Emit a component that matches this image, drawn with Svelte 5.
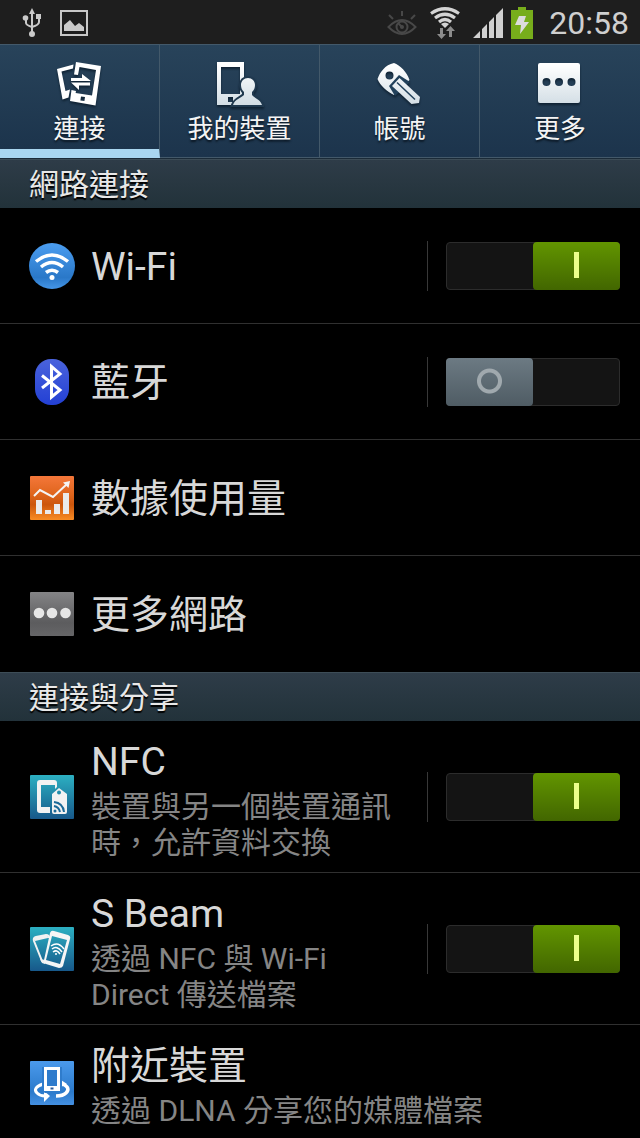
<script>
  /**
   * Settings — the "Connections" tab of the phone settings screen.
   */

  const tabs = [
    { id: 'connections', label: '連接' },
    { id: 'device', label: '我的裝置' },
    { id: 'accounts', label: '帳號' },
    { id: 'more', label: '更多' },
  ];

  let activeTab = $state('connections');

  let sections = $state([
    {
      title: '網路連接',
      rows: [
        { id: 'wifi', title: 'Wi-Fi', toggle: true, on: true },
        { id: 'bluetooth', title: '藍牙', toggle: true, on: false },
        { id: 'data', title: '數據使用量' },
        { id: 'networks', title: '更多網路' },
      ],
    },
    {
      title: '連接與分享',
      rows: [
        { id: 'nfc', title: 'NFC', note: '裝置與另一個裝置通訊時，允許資料交換', toggle: true, on: true },
        { id: 'sbeam', title: 'S Beam', note: '透過 NFC 與 Wi-Fi Direct 傳送檔案', toggle: true, on: true },
        { id: 'nearby', title: '附近裝置', note: '透過 DLNA 分享您的媒體檔案' },
      ],
    },
  ]);
</script>

{#snippet tabIcon(id)}
  <svg class="tab-icon" viewBox="0 0 48 48" aria-hidden="true">
    <defs>
      <linearGradient id="silver" x1="0" y1="0" x2="0" y2="48" gradientUnits="userSpaceOnUse">
        <stop offset="0.1" stop-color="#fff" />
        <stop offset="1" stop-color="#cfdbe3" />
      </linearGradient>
    </defs>
    {#if id === 'connections'}
      <g fill="#fff">
        <path d="M1 9 17.5 4.5 17 8.5 5.5 11.5 9.5 31 14 29.5 12.5 37.5 6.5 39.5Z" />
        <path fill-rule="evenodd" d="M20 2 45 6 39.5 45.5 14 41 15.5 30 20 31 19.6 33 36 35.5 40 10 23.5 7 22 15 18 14.5ZM25 36.5l-.6 4 4 .6.6-4Z" />
        <path d="M15 18h11v-4l9 7H15Z" />
        <path d="M15 22.5h19v3H23v4.5Z" />
      </g>
    {:else if id === 'device'}
      <path fill="url(#silver)" fill-rule="evenodd" d="M1 2h27v43H1ZM5 7v27h19V7ZM12 37v5h5v-5Z" />
      <path class="person" d="M32 18c-4 0-7 3-7 7 0 3 1 5 3 7v3c-3 3-9 4-11 10h29c-2-6-8-7-10-10v-3c2-2 3-4 3-7 0-4-3-7-7-7Z" />
      <path fill="url(#silver)" d="M32 18c-4 0-7 3-7 7 0 3 1 5 3 7v3c-3 3-9 4-11 10h29c-2-6-8-7-10-10v-3c2-2 3-4 3-7 0-4-3-7-7-7Z" />
    {:else if id === 'accounts'}
      <path fill="url(#silver)" fill-rule="evenodd" d="M18 3c6 2 13 9 15.5 17L18 35C12 32 4 26 1.5 19 4 12 9 5 18 3ZM13.5 11.5a4 4 0 1 0 0 8 4 4 0 0 0 0-8Z" />
      <path fill="#21405a" d="M23 15 34 22 19 36 13 26Z" />
      <path fill="url(#silver)" d="M23.5 18 44 37 43 43 35.5 44 16 26Z" />
      <path fill="none" stroke="#21405a" stroke-width="1.5" d="M21 22.5 39 39.5" />
    {:else}
      <path fill="url(#silver)" fill-rule="evenodd" d="M4 3h38a2 2 0 0 1 2 2v36a2 2 0 0 1-2 2H4a2 2 0 0 1-2-2V5a2 2 0 0 1 2-2ZM10.5 18a4 4 0 1 0 0 8 4 4 0 0 0 0-8ZM23 18a4 4 0 1 0 0 8 4 4 0 0 0 0-8ZM35.5 18a4 4 0 1 0 0 8 4 4 0 0 0 0-8Z" />
    {/if}
  </svg>
{/snippet}

{#snippet rowIcon(id)}
  <svg class="row-icon" viewBox="0 0 46 46" aria-hidden="true">
    {#if id === 'wifi'}
      <defs>
        <linearGradient id="wifi-bg" x2="0" y2="1">
          <stop offset="0" stop-color="#4b9df0" />
          <stop offset="0.75" stop-color="#2a78c8" />
          <stop offset="1" stop-color="#4596e8" />
        </linearGradient>
      </defs>
      <circle cx="23" cy="23" r="23" fill="url(#wifi-bg)" />
      <g fill="none" stroke="#fff" stroke-width="3.5">
        <path d="M7 18.5Q23 5.5 39 18.5" />
        <path d="M12 24Q23 15 34 24" />
        <path d="M17 29.5Q23 25 29 29.5" />
      </g>
      <circle cx="23" cy="34.5" r="2.5" fill="#fff" />
    {:else if id === 'bluetooth'}
      <defs>
        <linearGradient id="bt-bg" x2="0" y2="1">
          <stop offset="0" stop-color="#4a63dc" />
          <stop offset="1" stop-color="#2340d4" />
        </linearGradient>
      </defs>
      <rect x="6" width="34" height="46" rx="16" fill="url(#bt-bg)" />
      <path d="M13 16.5 31 31 22.5 38V7.5L31 15 13 29" fill="none" stroke="#fff" stroke-width="3" />
    {:else if id === 'data'}
      <defs>
        <linearGradient id="data-bg" x2="0" y2="1">
          <stop offset="0" stop-color="#f4773a" />
          <stop offset="0.4" stop-color="#e0661e" />
          <stop offset="0.65" stop-color="#cc560c" />
          <stop offset="1" stop-color="#f88c24" />
        </linearGradient>
      </defs>
      <rect x="1" y="1" width="44" height="44" rx="1" fill="url(#data-bg)" />
      <path d="M7 25h6v14H7ZM16 35h6v4h-6ZM25 29h6v10h-6ZM34 18h6v21h-6Z" fill="#eaeaea" />
      <path d="M5 21 11 15 24 22 38 9" fill="none" stroke="#f4f4f4" stroke-width="2" />
      <path d="M34 7.5 41 6 39.5 13Z" fill="#f4f4f4" />
    {:else if id === 'networks'}
      <defs>
        <linearGradient id="net-bg" x2="0" y2="1">
          <stop offset="0" stop-color="#848486" />
          <stop offset="0.7" stop-color="#5c5c5e" />
          <stop offset="1" stop-color="#666668" />
        </linearGradient>
      </defs>
      <rect x="1" y="1" width="44" height="44" rx="1" fill="url(#net-bg)" />
      <g fill="#e6e6e6">
        <circle cx="10" cy="22" r="5.3" />
        <circle cx="23" cy="22" r="5.3" />
        <circle cx="36.5" cy="22" r="5.3" />
      </g>
    {:else}
      <defs>
        <linearGradient id="teal-bg" x2="0" y2="1">
          <stop offset="0" stop-color="#2cb0c2" />
          <stop offset="1" stop-color="#17588a" />
        </linearGradient>
        <linearGradient id="near-bg" x2="0" y2="1">
          <stop offset="0" stop-color="#4b9aec" />
          <stop offset="0.7" stop-color="#2b7acb" />
          <stop offset="1" stop-color="#4490e2" />
        </linearGradient>
      </defs>
      <rect x="1" y="1" width="44" height="44" rx="1" fill={id === 'nearby' ? 'url(#near-bg)' : 'url(#teal-bg)'} />
      {#if id === 'nfc'}
        <path d="M11 6h14a3 3 0 0 1 3 3v4l-2 2v-4H12v22h9v6H11a3 3 0 0 1-3-3V9a3 3 0 0 1 3-3Z" fill="#f2f2f2" />
        <path fill-rule="evenodd" d="M30 14 38 20V38a2 2 0 0 1-2 2H25a2 2 0 0 1-2-2V20ZM30 16.5a2 2 0 1 0 0 4 2 2 0 0 0 0-4Z" fill="#f2f2f2" />
        <g fill="none" stroke="#1c6a98" stroke-width="2">
          <path d="M25 28Q34 29 35 38" />
          <path d="M25 32Q30 33 31 38" />
        </g>
        <circle cx="26" cy="37" r="1.5" fill="#1c6a98" />
      {:else if id === 'sbeam'}
        <path d="M17 36 13 35 5 15Q4 12 7 11L17 9Q20 9 20 12" fill="none" stroke="#f2f2f2" stroke-width="2" />
        <path d="M5 14Q5 11 7 11L17 9Q19 9 19 12L6 15ZM11 33 16 34 16 38 13 37Z" fill="#f2f2f2" />
        <path fill-rule="evenodd" d="M25 5 39 9Q42 10 41 13L34 40Q33 42 30 42L17 38Q14 37 15 34L21 7Q22 4 25 5ZM23 10 17 34 31 38 38 14Z" fill="#f6f6f6" />
        <g fill="none" stroke="#fff" stroke-width="1.5">
          <path d="M22 20Q29 15 35 23" />
          <path d="M23 23Q28 19 33 26" />
          <path d="M24 26Q28 23 31 28" />
        </g>
        <circle cx="27" cy="28" r="1" fill="#fff" />
      {:else}
        <path d="M14 24Q3 28 8 33 11 36 16 36" fill="none" stroke="#fff" stroke-width="3" />
        <path d="M15 31 21 36 15 42Z" fill="#fff" />
        <path d="M34 24Q42 28 37 33 34 36 27 36" fill="none" stroke="#fff" stroke-width="3.5" />
        <path d="M32 27V20L38 24Z" fill="#fff" />
        <path fill="#2f7ccc" d="M13 7H33V31L30 33H16L13 31Z" />
        <path fill-rule="evenodd" d="M15 7H31V31H15ZM18 10V26H28V10Z" fill="#fff" />
        <path d="M21.5 27.5h3v2h-3Z" fill="#2b5a98" />
      {/if}
    {/if}
  </svg>
{/snippet}

<div class="screen">
  <header class="status-bar">
    <svg width="20" height="30" viewBox="0 0 20 30" role="img" aria-label="USB">
      <g fill="none" stroke="#cacaca" stroke-width="2">
        <path d="M10 4V26M4 11v4q0 2 6 4M17 9v5q0 3-7 5" />
      </g>
      <g fill="#cacaca">
        <path d="M10 0 13 6H7Z" />
        <circle cx="3.5" cy="10" r="2.8" />
        <path d="M14 6h5v5h-5Z" />
        <circle cx="10" cy="26" r="3" />
      </g>
    </svg>
    <svg width="28" height="26" viewBox="0 0 28 26" role="img" aria-label="Screenshot">
      <rect x="1" y="1" width="26" height="24" fill="none" stroke="#c8c8c8" stroke-width="2" />
      <path d="M4 21V15L10 10 15 16 19 13 24 17V21Z" fill="#cacaca" />
    </svg>

    <div class="status-right">
      <svg width="30" height="26" viewBox="0 0 30 26" role="img" aria-label="Smart stay">
        <g fill="none" stroke="#484848" stroke-width="2">
          <path d="M1.5 17Q15 3 28.5 17 15 31 1.5 17Z" />
          <circle cx="15" cy="17" r="5.5" />
          <path d="M15 1v5M2 5l4 4M28 5l-4 4M11 13l4 4" />
        </g>
        <circle cx="15" cy="17" r="2" fill="#484848" />
      </svg>
      <svg width="32" height="32" viewBox="0 0 32 32" role="img" aria-label="Wi-Fi">
        <g fill="none" stroke="#d4d4d4" stroke-width="3.2">
          <path d="M2 6.5Q16-3 30 6.5" />
          <path d="M6 11Q16 3.5 26 11" />
          <path d="M10 15Q16 10 22 15" />
        </g>
        <path d="M12 17Q16 14 20 17L16 21Z" fill="#d4d4d4" />
        <path d="M11 21h3v6h3l-4.5 5L8 27h3ZM20 30h3v-6h3l-4.5-5-4.5 5h3Z" fill="#8c8c8c" />
      </svg>
      <div class="power">
        <svg width="30" height="30" viewBox="0 0 30 30" role="img" aria-label="Signal">
          <path d="M0 30 7 23V30ZM9 21 14 16V30H9ZM16 14 21 9V30H16ZM23 7 30 0V30H23Z" fill="#d0d0d0" />
        </svg>
        <svg width="22" height="32" viewBox="0 0 22 32" role="img" aria-label="Charging">
          <path d="M7 0h8v3h7v29H0V3h7Z" fill="#77ad1b" />
          <path d="M8 9h7l-2 6h5L9 27l1-9H4Z" fill="#dcdcdc" />
        </svg>
      </div>
      <time class="clock">20:58</time>
    </div>
  </header>

  <nav class="tabs">
    {#each tabs as tab}
      <button class="tab" class:active={activeTab === tab.id} onclick={() => (activeTab = tab.id)}>
        {@render tabIcon(tab.id)}
        <span>{tab.label}</span>
      </button>
    {/each}
  </nav>

  <main>
    {#each sections as section}
      <h2>{section.title}</h2>
      <ul>
        {#each section.rows as row}
          <li class="row">
            {@render rowIcon(row.id)}
            <div class="row-text">
              <label class="row-title" for={row.toggle ? row.id : null}>{row.title}</label>
              {#if row.note}
                <p class="row-note">{row.note}</p>
              {/if}
            </div>
            {#if row.toggle}
              <div class="toggle-cell">
                <input id={row.id} class="toggle" type="checkbox" role="switch" bind:checked={row.on} />
              </div>
            {/if}
          </li>
        {/each}
      </ul>
    {/each}
  </main>
</div>

<style>
  :global(body) {
    background: #000;
  }

  .screen {
    height: 100vh;
    overflow: hidden;
    background: #000;
    color: #d8d8d8;
    font-family: Roboto, "Noto Sans CJK TC", sans-serif;
  }

  /* Status bar */
  .status-bar {
    display: flex;
    align-items: center;
    gap: 18px;
    height: 44px;
    padding: 1px 11px 0 22px;
    background: #1e1e1e;
    box-sizing: border-box;
  }

  .status-right {
    display: flex;
    align-items: center;
    gap: 12px;
    margin-left: auto;
  }

  .power {
    display: flex;
    align-items: center;
    gap: 8px;
  }

  .clock {
    margin-left: 4px;
    color: #cfcfcf;
    font-size: 32px;
    line-height: 42px;
  }

  /* Tabs */
  .tabs {
    display: grid;
    grid-template-columns: repeat(4, 1fr);
    border-bottom: 1px solid #1b2b38;
  }

  .tab {
    display: flex;
    flex-direction: column;
    align-items: center;
    height: 114px;
    padding: 15px 0 0;
    border: solid #43596a;
    border-width: 1px 1px 1px 0;
    background: linear-gradient(#28435a, #1c344c);
    color: #f4f4f4;
    font-family: inherit;
    font-size: 26px;
    line-height: 42px;
    text-shadow: 0 2px 2px #0a1622;
    box-sizing: border-box;
  }

  .tab:last-child {
    border-right: 0;
  }

  .tab.active {
    border-bottom: 9px solid #a9d6f0;
  }

  .tab-icon {
    width: 48px;
    height: 48px;
    flex-shrink: 0;
    filter: drop-shadow(0 2px 1px #0f2233);
  }

  .person {
    fill: none;
    stroke: #20394f;
    stroke-width: 4;
  }

  /* Section headers */
  h2 {
    height: 49px;
    margin: 0;
    padding: 0 29px;
    border-top: 1px solid #3d4d57;
    background: linear-gradient(#2e3c48, #22323a);
    color: #e8e8e8;
    font-size: 30px;
    font-weight: 400;
    line-height: 50px;
    text-shadow: 0 2px 1px #000;
    box-sizing: border-box;
  }

  ul {
    margin: 0;
    padding: 0;
    list-style: none;
  }

  /* Rows */
  .row {
    display: flex;
    align-items: center;
    gap: 16px;
    min-height: 116px;
    padding: 11px 20px 11px 29px;
    border-bottom: 1px solid #303030;
    box-sizing: border-box;
  }

  ul .row:last-child {
    border-bottom-color: #000;
  }

  .row-icon {
    width: 46px;
    height: 46px;
    flex-shrink: 0;
  }

  .row-text {
    flex: 1;
    padding-top: 3px;
  }

  .row-title {
    display: block;
    font-size: 39px;
    line-height: 54px;
  }

  .row-note {
    margin: 0;
    color: #858585;
    font-size: 30px;
    line-height: 36px;
  }

  /* On/off switch */
  .toggle-cell {
    display: flex;
    align-items: center;
    height: 50px;
    padding-left: 18px;
    border-left: 1px solid #383838;
  }

  .toggle {
    display: flex;
    width: 174px;
    height: 48px;
    margin: 0;
    border: 1px solid #2c2c2c;
    border-radius: 4px;
    background: #141414;
    appearance: none;
    box-sizing: border-box;
    cursor: pointer;
  }

  .toggle::before {
    content: '';
    width: 87px;
    margin: -1px;
    border-radius: 4px;
    background:
      radial-gradient(circle at 50% 48%, transparent 8px, #a0a9ae 9px, #a0a9ae 12px, transparent 13px),
      linear-gradient(#6c7a83, #4f5c64);
  }

  .toggle:checked::before {
    margin-left: auto;
    background:
      linear-gradient(#ecff8c, #ecff8c) center 10px / 5px 26px no-repeat,
      linear-gradient(#629500, #426600);
  }
</style>
